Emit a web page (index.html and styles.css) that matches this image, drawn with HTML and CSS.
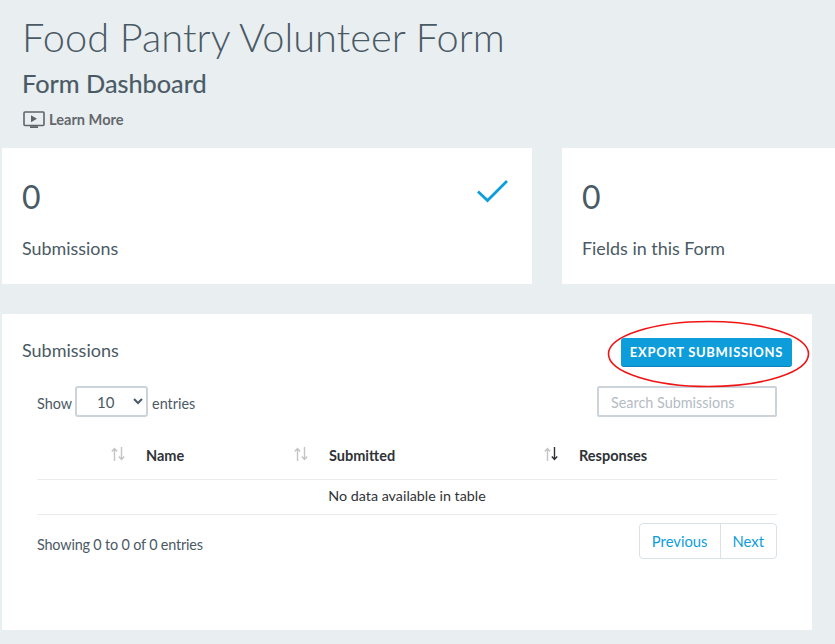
FILE: index.html
```html
<!DOCTYPE html>
<html lang="en">
<head>
  <meta charset="UTF-8" />
  <title>Food Pantry Volunteer Form</title>
  <link rel="stylesheet" href="styles.css">
</head>
<body>
  <header class="page-head">
    <h1>Food Pantry Volunteer Form</h1>
    <h2>Form Dashboard</h2>
    <a class="learn-more" href="#">
      <svg width="23" height="18" viewBox="0 0 23 18" aria-hidden="true">
        <rect x="1" y="1" width="20" height="13.5" rx="1" fill="none" stroke="#5f6468" stroke-width="1.6"/>
        <path d="M8 4.2v7l6-3.5z" fill="#5f6468"/>
        <rect x="7" y="15.2" width="8" height="1.8" fill="#5f6468"/>
      </svg>
      Learn More
    </a>
  </header>

  <section class="stats">
    <div class="stat-card">
      <div class="stat-num">0</div>
      <div class="stat-label">Submissions</div>
      <svg class="stat-check" width="33" height="26" viewBox="0 0 33 26" aria-hidden="true">
        <path d="M2 13.5l9.500 9L31 3" fill="none" stroke="#0d9ddb" stroke-width="2.8"/>
      </svg>
    </div>
    <div class="stat-card">
      <div class="stat-num">0</div>
      <div class="stat-label">Fields in this Form</div>
    </div>
  </section>

  <section class="panel">
    <div class="panel-head">
      <h3>Submissions</h3>
      <button class="export-btn">EXPORT SUBMISSIONS</button>
    </div>

    <div class="table-tools">
      <label class="length"><span>Show</span>
        <select><option>10</option></select>
        <span>entries</span>
      </label>
      <input class="search" type="text" placeholder="Search Submissions">
    </div>

    <table class="data-table">
      <thead>
        <tr>
          <th class="col-check">
            <svg class="sort" width="14" height="14" viewBox="0 0 14 14" aria-hidden="true">
              <path class="arrow" d="M3.5 14V2M.8 4.5l2.7-3 2.7 3"/>
              <path class="arrow" d="M10.5 0v12M7.800 9.500l2.700 3 2.700-3"/>
            </svg>
          </th>
          <th class="col-name">Name
            <svg class="sort" width="14" height="14" viewBox="0 0 14 14" aria-hidden="true">
              <path class="arrow" d="M3.5 14V2M.8 4.5l2.7-3 2.7 3"/>
              <path class="arrow" d="M10.5 0v12M7.800 9.500l2.700 3 2.700-3"/>
            </svg>
          </th>
          <th class="col-date">Submitted
            <svg class="sort" width="14" height="14" viewBox="0 0 14 14" aria-hidden="true">
              <path class="arrow" d="M3.5 14V2M.8 4.5l2.700-3 2.700 3"/>
              <path class="arrow on" d="M10.500 0v12M7.800 9.500l2.700 3 2.700-3"/>
            </svg>
          </th>
          <th>Responses</th>
        </tr>
      </thead>
      <tbody>
        <tr><td colspan="4">No data available in table</td></tr>
      </tbody>
    </table>

    <div class="table-foot">
      <span class="table-info">Showing 0 to 0 of 0 entries</span>
      <div class="pager">
        <a href="#">Previous</a>
        <a href="#">Next</a>
      </div>
    </div>

    <!-- hand drawn highlight round the button -->
    <svg class="ring" width="205" height="70" viewBox="0 0 205 70" aria-hidden="true">
      <ellipse cx="102.5" cy="35" rx="100" ry="32.5" fill="none" stroke="#f01414" stroke-width="1.6"/>
    </svg>
  </section>
</body>
</html>
```

FILE: styles.css
```css
:root {
  --bg: #e9eef1;
  --text: #4a5a65;
  --blue: #0d9ddb;
  --line: #e8ecef;
  --field: #ccd3da;
}

body {
  margin: 0;
  height: 644px;
  overflow: hidden;
  font-family: Lato, "Liberation Sans", sans-serif;
  background: var(--bg);
  color: var(--text);
}

.page-head {
  height: 148px;
  padding: 0 0 0 23px;
  box-sizing: border-box;
}

.page-head h1 {
  margin: 0 0 0 -1px;
  padding-top: 13px;
  font-size: 39.75px;
  line-height: 48px;
  font-weight: 300;
}

.page-head h2 {
  margin: 5px 0 0 -1px;
  font-size: 25.3px;
  line-height: 35px;
  font-weight: 400;
  -webkit-text-stroke: 0.2px var(--text);
}

.learn-more {
  display: flex;
  align-items: center;
  gap: 3px;
  margin-top: 10px;
  font-size: 14.6px;
  font-weight: 700;
  line-height: 18px;
  color: #63686c;
  text-decoration: none;
}

.stats {
  display: grid;
  grid-template-columns: 530px 1fr;
  gap: 30px;
  margin-left: 2px;
}

.stat-card {
  position: relative;
  height: 136px;
  padding: 29px 20px 0;
  box-sizing: border-box;
  background: #fff;
}

.stat-num {
  font-size: 32px;
  line-height: 40px;
}

.stat-label {
  margin-top: 20px;
  font-size: 17.9px;
  line-height: 22px;
}

.stat-check {
  position: absolute;
  top: 30px;
  right: 23px;
}

.panel {
  position: relative;
  width: 810px;
  height: 316px;
  margin: 30px 0 0 2px;
  padding: 0 35px;
  box-sizing: border-box;
  background: #fff;
}

.panel-head {
  display: flex;
  justify-content: space-between;
  align-items: center;
  height: 72px;
  margin-right: -15px;
  margin-left: -15px;
}

.panel-head h3 {
  margin: 0;
  font-size: 18px;
  font-weight: 400;
}

.export-btn {
  width: 171px;
  height: 29px;
  margin-top: 4px;
  padding: 0;
  border: 0;
  border-bottom: 1px solid #0a84ba;
  border-radius: 3px;
  background: var(--blue);
  color: #fff;
  font-family: inherit;
  font-size: 13px;
  font-weight: 700;
  letter-spacing: 0.7px;
}

.ring {
  position: absolute;
  top: 5px;
  left: 604px;
}

.table-tools {
  display: flex;
  justify-content: space-between;
  align-items: center;
  height: 31px;
}

.length {
  display: flex;
  align-items: center;
  gap: 3px;
  font-size: 14.4px;
}

.length span {
  padding-top: 4px;
}

.length select {
  width: 73px;
  height: 31px;
  margin-right: 1px;
  padding-left: 16px;
  border: 2px solid var(--field);
  border-radius: 3px;
  background-color: #fff;
  color: var(--text);
  font-family: inherit;
  font-size: 15px;
}

.search {
  width: 180px;
  height: 31px;
  padding: 2px 12px 0;
  box-sizing: border-box;
  border: 2px solid var(--field);
  border-radius: 2px;
  font-family: inherit;
  font-size: 14.4px;
}

.search::placeholder {
  color: #b4bcc3;
}

.data-table {
  width: 740px;
  margin-top: 14px;
  border-collapse: collapse;
  table-layout: fixed;
  font-size: 14.5px;
  color: #2f3337;
}

.data-table th {
  position: relative;
  box-sizing: border-box;
  height: 48px;
  padding: 2px 0 0 13px;
  text-align: left;
  font-weight: 700;
  border-bottom: 1px solid var(--line);
}

.col-check { width: 96px; }
.col-name { width: 183px; }
.col-date { width: 250px; }

.sort {
  position: absolute;
  top: 16px;
  right: 8px;
}

.arrow {
  fill: none;
  stroke: #c4c4c4;
  stroke-width: 1.4;
}

.arrow.on {
  stroke: #2f3337;
}

.data-table td {
  height: 35px;
  padding: 0 0 2px;
  box-sizing: border-box;
  text-align: center;
  font-size: 14.3px;
  border-bottom: 1px solid var(--line);
}

.table-foot {
  display: flex;
  justify-content: space-between;
  align-items: flex-start;
  margin-top: 8px;
  font-size: 14.8px;
}

.table-info {
  padding-top: 13px;
  font-size: 14.4px;
  letter-spacing: -0.17px;
}

.pager {
  display: flex;
  border: 1px solid #dbe2e7;
  border-radius: 4px;
}

.pager a {
  padding: 0 12px;
  line-height: 34px;
  color: var(--blue);
  text-decoration: none;
}

.pager a + a {
  border-left: 1px solid #dbe2e7;
}
```
